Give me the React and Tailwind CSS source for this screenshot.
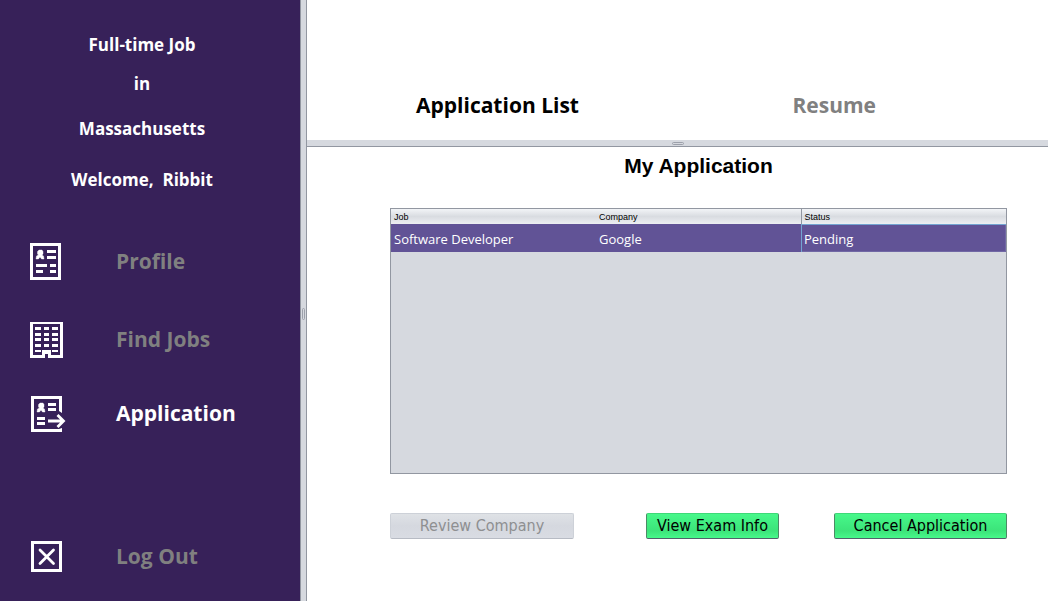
import React, { useState } from "react";

const Person = () => (
  <path d="M9 7h3l1 1.500v2.500l-1 1l1.500 1l.5 3h-2.500l-1-1.500h-1L8.500 16H6l.5-3L8.500 12l-1-1V8.500z" fill="currentColor" stroke="currentColor" strokeWidth="0.400" shapeRendering="auto" />
);

const ProfileIcon = () => (
  <svg width="36" height="38" viewBox="0 0 36 38" fill="currentColor" shapeRendering="crispEdges" aria-hidden="true">
    <path fillRule="evenodd" d="M0 0h31v37H0zM3 3v31h25V3z" />
    <Person />
    <path d="M17 7h9v3h-9zM17 13h9v3h-9zM6 21h11v3H6zM20 21h6v3h-6zM6 27h7v3H6zM20 27h6v3h-6z" />
  </svg>
);

const BuildingIcon = () => (
  <svg width="36" height="38" viewBox="0 -1 36 38" fill="currentColor" shapeRendering="crispEdges" aria-hidden="true">
    <path d="M0 0h33v36H18v-4h-3v4H0zM3 2v31h9v-5h9v5h9V2z" fillRule="evenodd" />
    <path d="M5 5h6v3H5zM14 5h5v3h-5zM22 5h6v3h-6zM5 11h6v3H5zM14 11h5v3h-5zM22 11h6v3h-6zM5 16h6v3H5zM14 16h5v3h-5zM22 16h6v3h-6zM5 22h6v3H5zM14 22h5v3h-5zM22 22h6v3h-6zM5 28h6v2H5zM22 28h6v2h-6z" />
  </svg>
);

const ApplicationIcon = () => (
  <svg width="36" height="38" viewBox="-1 -1 36 38" fill="currentColor" aria-hidden="true">
    <path d="M0 0h31v17l-3-2V3H3v30h25l3-1v4H0z" />
    <Person />
    <path d="M17 7h8v3h-8zM17 12h8v3h-8zM6 21h8v3H6zM6 26h8v3H6z" />
    <path d="M17 25h15M26.500 19l6 6l-6 6" fill="none" stroke="currentColor" strokeWidth="2.800" />
  </svg>
);

const LogOutIcon = () => (
  <svg width="36" height="38" viewBox="-1 -3 36 38" fill="currentColor" aria-hidden="true">
    <path fillRule="evenodd" d="M0 0h31v31H0zM3 3v25h25V3z" />
    <path d="M9 9l13.500 13.500M22.500 9L9 22.500" fill="none" stroke="currentColor" strokeWidth="2.800" strokeLinecap="round" />
  </svg>
);

function NavItem({ icon: Icon, label, active, onClick }) {
  return (
    <button
      type="button"
      onClick={onClick}
      className="flex h-[38px] w-full items-center gap-[50px] text-left text-white"
    >
      <Icon />
      <span className={active ? "pb-0.5 text-white" : "pb-0.5 text-[#808080]"}>{label}</span>
    </button>
  );
}

function ActionButton({ children, className }) {
  return (
    <button
      type="button"
      className={
        "h-[26px] rounded-xs border border-t-[#3fd878] border-x-[#4d8a66] border-b-[#52606a] bg-linear-to-b from-[#47f88a] via-[#3ce47a] via-70% to-[#47f88a] text-center font-['DejaVu_Sans_Condensed','DejaVu_Sans',sans-serif] text-base leading-6 whitespace-nowrap text-black " +
        className
      }
    >
      {children}
    </button>
  );
}

export default function App() {
  const [page, setPage] = useState("Application");
  return (
    <div className="flex min-h-screen bg-white font-['Open_Sans','Noto_Sans',sans-serif]">
      <aside className="flex w-[300px] shrink-0 flex-col bg-[#372159] pl-[30px] text-[21px] leading-8 font-bold">
        <div className="-ml-[30px] pt-[33px] pr-4 text-center text-[17px] leading-6 font-bold text-white">
          <p>Full-time Job</p>
          <p className="mt-[15px]">in</p>
          <p className="mt-[21px]">Massachusetts</p>
          <p className="mt-[27px] whitespace-pre">Welcome,  Ribbit</p>
        </div>
        <nav className="flex flex-col pt-[51px]">
          <NavItem icon={ProfileIcon} label="Profile" active={page === "Profile"} onClick={() => setPage("Profile")} />
          <div className="h-10" />
          <NavItem icon={BuildingIcon} label="Find Jobs" active={page === "Find Jobs"} onClick={() => setPage("Find Jobs")} />
          <div className="h-9" />
          <NavItem icon={ApplicationIcon} label="Application" active={page === "Application"} onClick={() => setPage("Application")} />
          <div className="h-[105px]" />
          <NavItem icon={LogOutIcon} label="Log Out" />
        </nav>
      </aside>

      <div className="flex w-[7px] shrink-0 flex-col items-center justify-center border-x border-[#9297a1] bg-[#d6d9df] pt-[26px]">
        <div className="h-3 w-[3px] rounded-xs border border-[#9ca0aa]" />
      </div>

      <main className="flex min-w-0 grow flex-col">
        <div className="flex items-center justify-between pt-[89px] pr-[172px] pb-[19px] pl-[109px] text-[21px] leading-8 font-bold whitespace-nowrap">
          <button type="button" className="text-black">Application List</button>
          <button type="button" className="text-[#808080]">Resume</button>
        </div>
        <div className="flex h-[7px] items-center justify-center border-b border-[#9297a1] bg-[#d6d9df]">
          <div className="h-[3px] w-3 rounded-xs border border-[#9ca0aa]" />
        </div>

        <section className="flex flex-col pt-[5px] pr-[41px] pl-[83px]">
          <h1 className="text-center font-['Liberation_Sans',Arial,sans-serif] text-[21px] leading-7 font-bold text-black">My Application</h1>
          <div className="mt-7 h-[266px] border border-[#9297a1] bg-[#d6d9df]">
            <table className="w-full table-fixed border-collapse text-left">
              <thead>
                <tr className="h-[15px] bg-linear-to-b from-[#f2f4f7] via-[#d9dce1] to-[#eceef2] font-['Liberation_Sans',Arial,sans-serif] text-[9px] leading-[14px] text-black">
                  <th className="p-0 pl-[3px] font-normal">Job</th>
                  <th className="p-0 pl-[3px] font-normal">Company</th>
                  <th className="border-l border-[#9297a1] p-0 pl-[3px] font-normal">Status</th>
                </tr>
              </thead>
              <tbody>
                <tr className="h-7 bg-[#615396] text-[13px] leading-[18px] text-white">
                  <td className="p-0 pt-0.5 pl-[3px]">Software Developer</td>
                  <td className="p-0 pt-0.5 pl-[3px]">Google</td>
                  <td className="p-0 pt-0.5 pl-[3px] shadow-[inset_1px_1px_0_#73a4d1,inset_-1px_-1px_0_#7168a5]">Pending</td>
                </tr>
              </tbody>
            </table>
          </div>
          <div className="mt-[39px] flex">
            <button
              type="button"
              disabled
              className="h-[26px] w-[184px] rounded-xs border border-[#cdd1d8] border-b-[#b7bbc4] bg-linear-to-b from-[#dfe2e6] via-[#d5d8df] to-[#d9dce3] text-center font-['DejaVu_Sans_Condensed','DejaVu_Sans',sans-serif] text-base leading-6 text-[#8e8f91]"
            >
              Review Company
            </button>
            <ActionButton className="ml-[72px] w-[133px]">View Exam Info</ActionButton>
            <ActionButton className="ml-auto w-[173px]">Cancel Application</ActionButton>
          </div>
        </section>
      </main>
    </div>
  );
}
